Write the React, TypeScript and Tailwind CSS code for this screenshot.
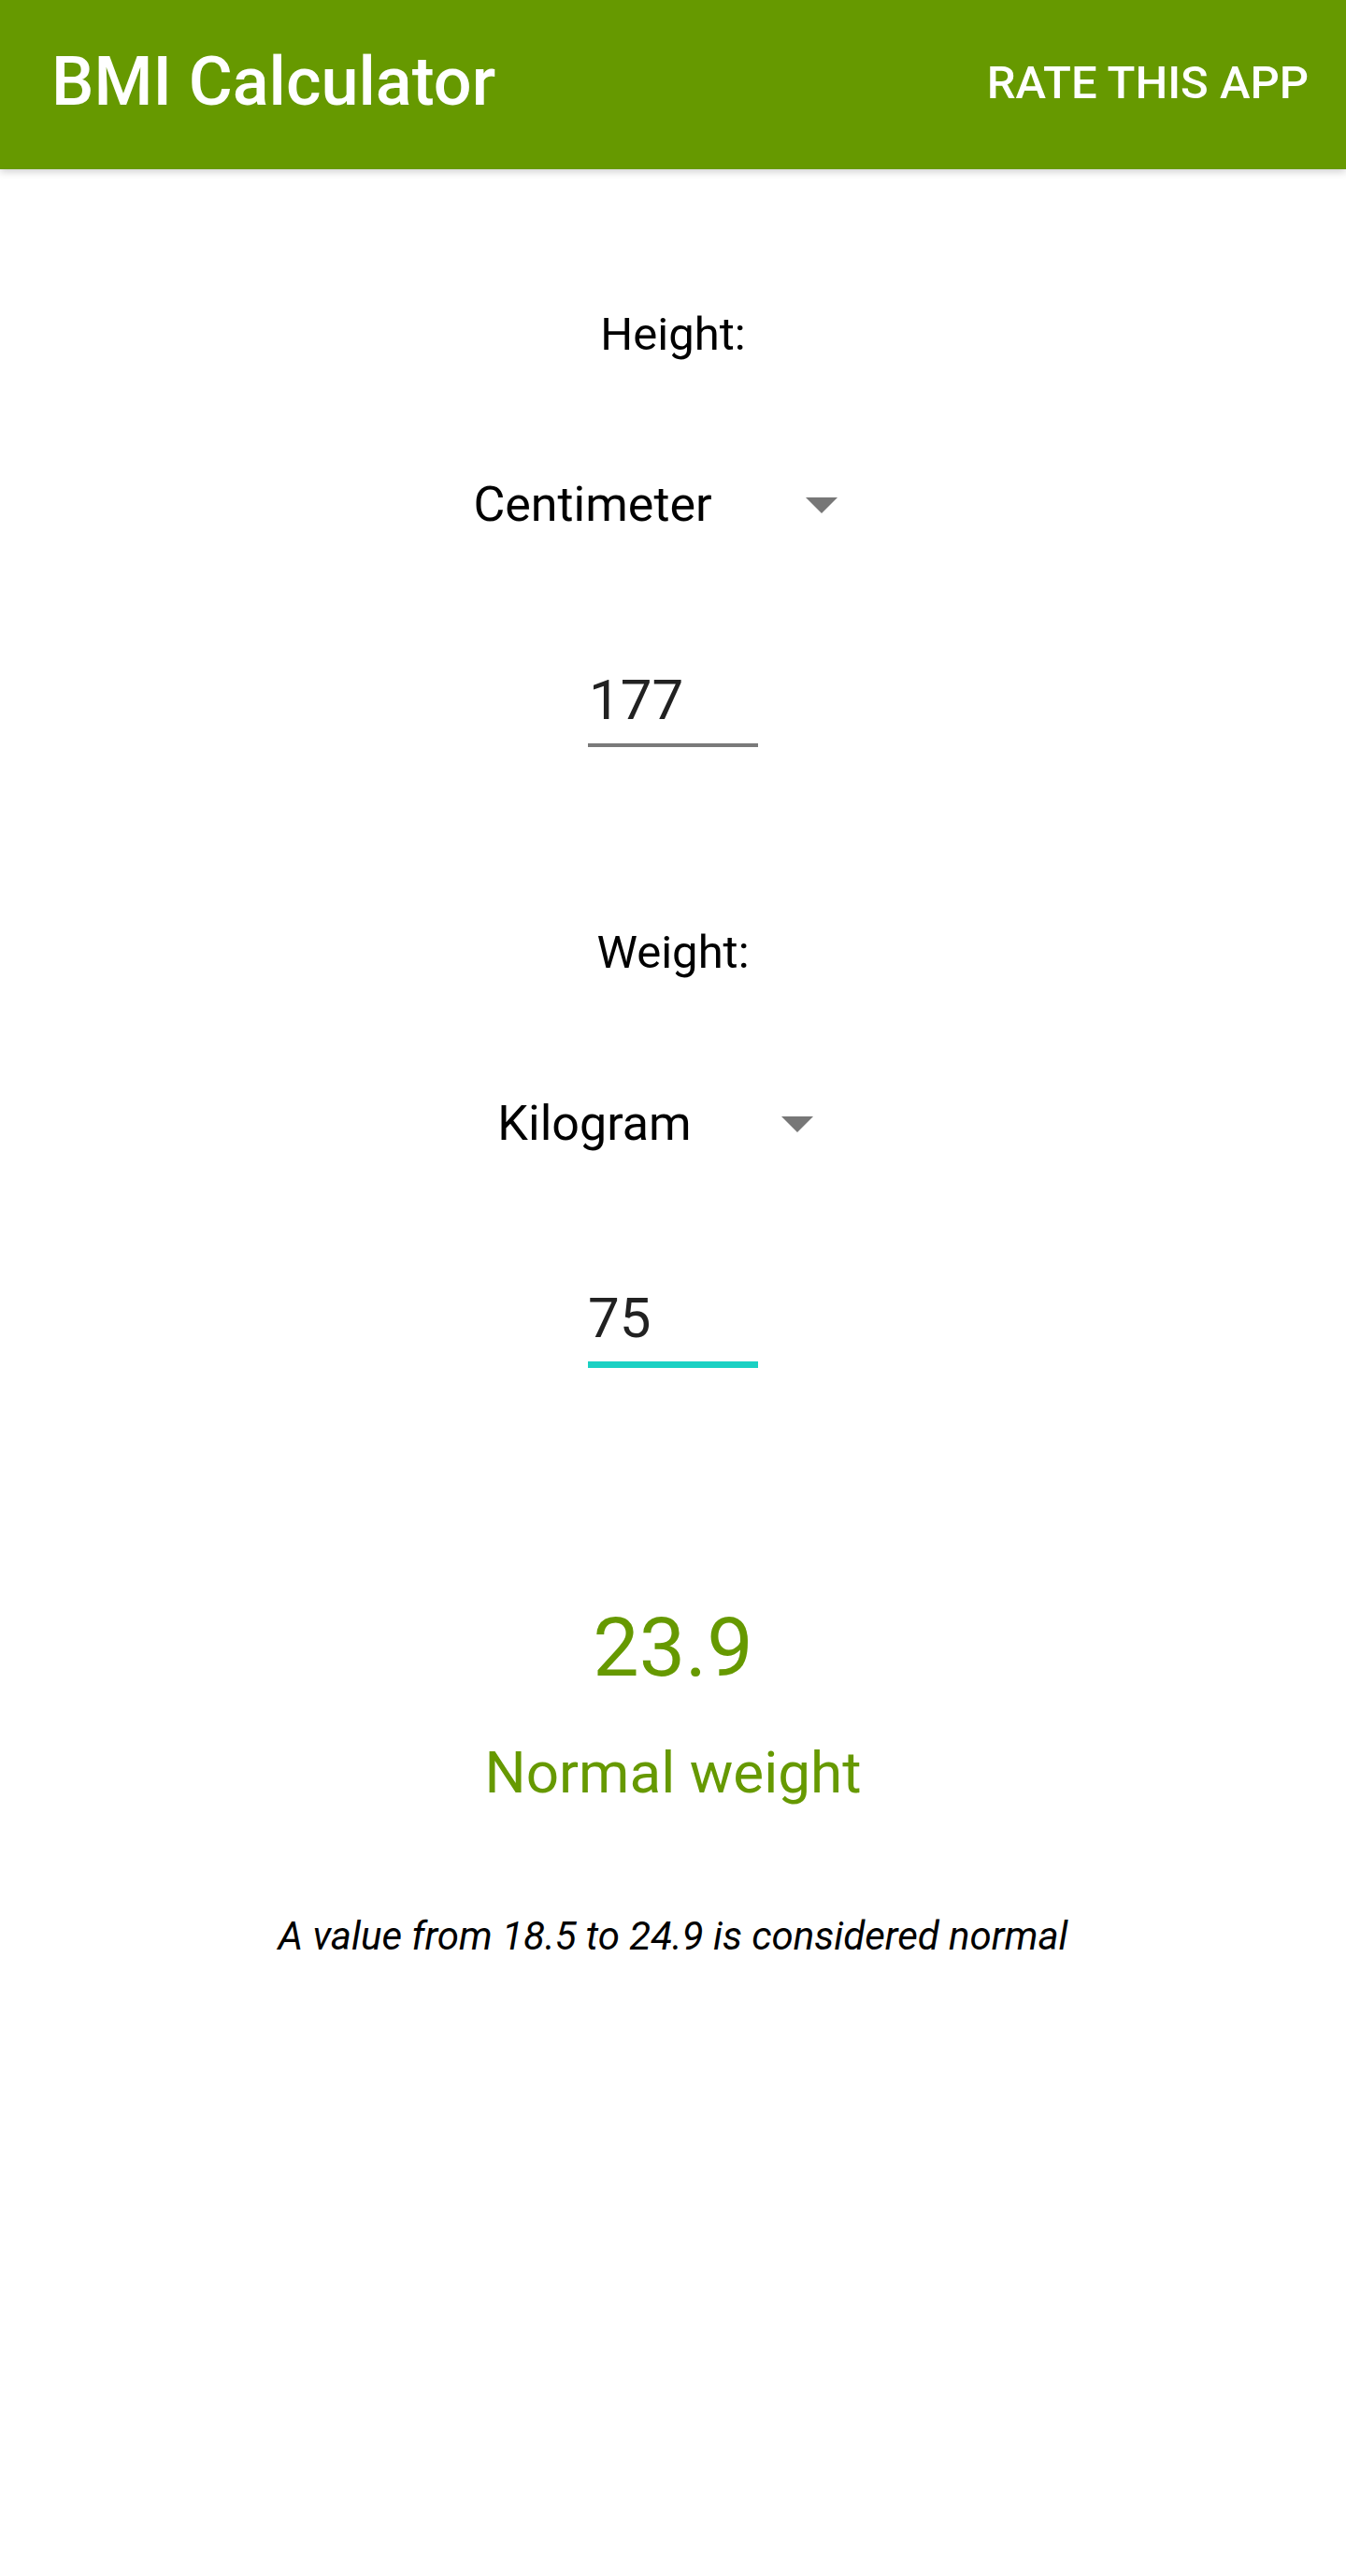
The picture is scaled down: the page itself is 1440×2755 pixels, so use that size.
import React from 'react';

const font = { fontFamily: 'Roboto, "Noto Sans", sans-serif' };

const Caret: React.FC = () => (
  <svg width="34" height="17" viewBox="0 0 34 17" className="block">
    <polygon points="0,0 34,0 17,17" fill="#777777" />
  </svg>
);

const Spinner: React.FC<{ label: string; gap: string }> = ({ label, gap }) => (
  <div className="flex items-center pr-[38px]">
    <span className="text-[52px] leading-none text-black">{label}</span>
    <span className={gap}>
      <Caret />
    </span>
  </div>
);

const App: React.FC = () => {
  return (
    <div className="w-[1440px] h-[2755px] bg-white overflow-hidden" style={font}>
      {/* Toolbar */}
      <header className="relative z-10 h-[181px] bg-[#669900] flex items-center justify-between pl-[55px] pr-[40px] pb-[5px] shadow-[0_3px_8px_rgba(0,0,0,0.18)]">
        <h1 className="text-[72px] leading-none font-medium text-white">BMI Calculator</h1>
        <button className="text-[49px] leading-none font-medium text-white uppercase">Rate this app</button>
      </header>

      <main className="flex flex-col items-center">
        {/* Height */}
        <div className="mt-[152px] text-[49px] leading-none text-black">Height:</div>
        <div className="mt-[132px]">
          <Spinner label="Centimeter" gap="ml-[100px]" />
        </div>
        <div className="mt-[153px] w-[182px] pl-[1px] pb-[16px] border-b-[4px] border-[#7a7a7a]">
          <span className="block text-[60px] leading-none text-[#212121]">177</span>
        </div>

        {/* Weight */}
        <div className="mt-[195px] text-[49px] leading-none text-black">Weight:</div>
        <div className="mt-[133px]">
          <Spinner label="Kilogram" gap="ml-[96px]" />
        </div>
        <div className="mt-[152px] w-[182px] pb-[16px] border-b-[7px] border-[#1ad1c3]">
          <span className="block text-[60px] leading-none text-[#212121]">75</span>
        </div>

        {/* Result */}
        <div className="mt-[255px] text-[88px] leading-none text-[#669900]">23.9</div>
        <div className="mt-[59px] text-[62px] leading-none text-[#669900]">Normal weight</div>
        <p className="mt-[123px] text-[42px] leading-none italic text-black">
          A value from 18.5 to 24.9 is considered normal
        </p>
      </main>
    </div>
  );
};

export default App;
